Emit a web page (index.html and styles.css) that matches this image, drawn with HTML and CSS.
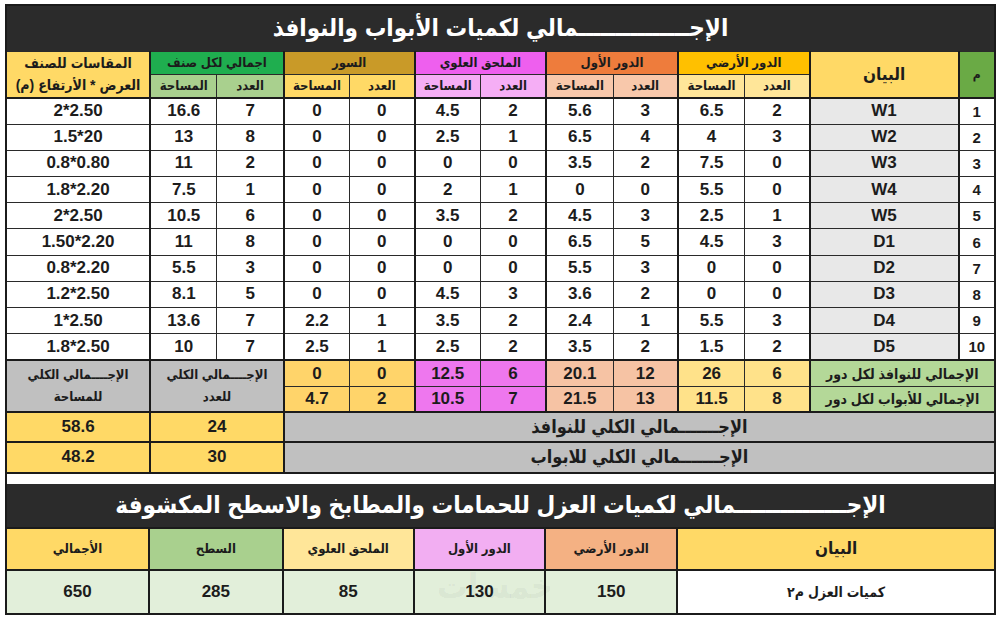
FILE: index.html
```html
<!DOCTYPE html>
<html lang="ar">
<head>
<meta charset="utf-8">
<link rel="stylesheet" href="styles.css">
</head>
<body>
<div class="sheet">
  <table class="grid top">
    <colgroup>
      <col class="w-no g"><col class="w-desc g">
      <col class="w-c"><col class="w-a g"><col class="w-c"><col class="w-a g">
      <col class="w-c2"><col class="w-a2 g"><col class="w-c"><col class="w-a2 g">
      <col class="w-a"><col class="w-a g"><col class="w-dim">
    </colgroup>
    <tr class="r-title"><th colspan="13" class="title">الإجـــــــــــــــمالي لكميات الأبواب والنوافذ</th></tr>
    <tr class="r-h1">
      <th rowspan="2" class="h-no">م</th>
      <th rowspan="2" class="h-desc">البيان</th>
      <th colspan="2" class="h-ground">الدور الأرضي</th>
      <th colspan="2" class="h-first">الدور الأول</th>
      <th colspan="2" class="h-annex">الملحق العلوي</th>
      <th colspan="2" class="h-fence">السور</th>
      <th colspan="2" class="h-total">اجمالي لكل صنف</th>
      <th rowspan="2" class="h-dim">المقاسات للصنف<br>العرض * الأرتفاع (م)</th>
    </tr>
    <tr class="r-h2">
      <th class="s-ground">العدد</th><th class="s-ground">المساحة</th>
      <th class="s-first">العدد</th><th class="s-first">المساحة</th>
      <th class="s-annex">العدد</th><th class="s-annex">المساحة</th>
      <th class="s-fence">العدد</th><th class="s-fence">المساحة</th>
      <th class="s-total">العدد</th><th class="s-total">المساحة</th>
    </tr>
    <tr class="r-data r-first"><td class="no">1</td><td class="desc">W1</td><td>2</td><td>6.5</td><td>3</td><td>5.6</td><td>2</td><td>4.5</td><td>0</td><td>0</td><td>7</td><td>16.6</td><td class="dim"><span class="ltr">2*2.50</span></td></tr>
    <tr class="r-data"><td class="no">2</td><td class="desc">W2</td><td>3</td><td>4</td><td>4</td><td>6.5</td><td>1</td><td>2.5</td><td>0</td><td>0</td><td>8</td><td>13</td><td class="dim"><span class="ltr">1.5*20</span></td></tr>
    <tr class="r-data"><td class="no">3</td><td class="desc">W3</td><td>0</td><td>7.5</td><td>2</td><td>3.5</td><td>0</td><td>0</td><td>0</td><td>0</td><td>2</td><td>11</td><td class="dim"><span class="ltr">0.8*0.80</span></td></tr>
    <tr class="r-data"><td class="no">4</td><td class="desc">W4</td><td>0</td><td>5.5</td><td>0</td><td>0</td><td>1</td><td>2</td><td>0</td><td>0</td><td>1</td><td>7.5</td><td class="dim"><span class="ltr">1.8*2.20</span></td></tr>
    <tr class="r-data"><td class="no">5</td><td class="desc">W5</td><td>1</td><td>2.5</td><td>3</td><td>4.5</td><td>2</td><td>3.5</td><td>0</td><td>0</td><td>6</td><td>10.5</td><td class="dim"><span class="ltr">2*2.50</span></td></tr>
    <tr class="r-data"><td class="no">6</td><td class="desc">D1</td><td>3</td><td>4.5</td><td>5</td><td>6.5</td><td>0</td><td>0</td><td>0</td><td>0</td><td>8</td><td>11</td><td class="dim"><span class="ltr">1.50*2.20</span></td></tr>
    <tr class="r-data"><td class="no">7</td><td class="desc">D2</td><td>0</td><td>0</td><td>3</td><td>5.5</td><td>0</td><td>0</td><td>0</td><td>0</td><td>3</td><td>5.5</td><td class="dim"><span class="ltr">0.8*2.20</span></td></tr>
    <tr class="r-data"><td class="no">8</td><td class="desc">D3</td><td>0</td><td>0</td><td>2</td><td>3.6</td><td>3</td><td>4.5</td><td>0</td><td>0</td><td>5</td><td>8.1</td><td class="dim"><span class="ltr">1.2*2.50</span></td></tr>
    <tr class="r-data"><td class="no">9</td><td class="desc">D4</td><td>3</td><td>5.5</td><td>1</td><td>2.4</td><td>2</td><td>3.5</td><td>1</td><td>2.2</td><td>7</td><td>13.6</td><td class="dim"><span class="ltr">1*2.50</span></td></tr>
    <tr class="r-data"><td class="no">10</td><td class="desc">D5</td><td>2</td><td>1.5</td><td>2</td><td>3.5</td><td>2</td><td>2.5</td><td>1</td><td>2.5</td><td>7</td><td>10</td><td class="dim"><span class="ltr">1.8*2.50</span></td></tr>
    <tr class="r-sum r-sum1">
      <td colspan="2" class="lbl">الإجمالي للنوافذ لكل دور</td>
      <td class="v-ground">6</td><td class="v-ground">26</td>
      <td class="v-first">12</td><td class="v-first">20.1</td>
      <td class="v-annex">6</td><td class="v-annex">12.5</td>
      <td class="v-fence">0</td><td class="v-fence">0</td>
      <td colspan="2" rowspan="2" class="grey sm">الإجــــمالي الكلي<br>للعدد</td>
      <td rowspan="2" class="grey sm">الإجــــمالي الكلي<br>للمساحة</td>
    </tr>
    <tr class="r-sum r-sum2">
      <td colspan="2" class="lbl">الإجمالي للأبواب لكل دور</td>
      <td class="v-ground">8</td><td class="v-ground">11.5</td>
      <td class="v-first">13</td><td class="v-first">21.5</td>
      <td class="v-annex">7</td><td class="v-annex">10.5</td>
      <td class="v-fence">2</td><td class="v-fence">4.7</td>
    </tr>
    <tr class="r-tot">
      <td colspan="10" class="grey big">الإجـــــــمالي الكلي للنوافذ</td>
      <td colspan="2" class="yel">24</td>
      <td class="yel">58.6</td>
    </tr>
    <tr class="r-tot">
      <td colspan="10" class="grey big">الإجـــــــمالي الكلي للابواب</td>
      <td colspan="2" class="yel">30</td>
      <td class="yel">48.2</td>
    </tr>
  </table>
  <div class="gap"></div>
  <table class="grid bottom">
    <colgroup>
      <col class="b-desc"><col class="b-c"><col class="b-c"><col class="b-c3"><col class="b-c4"><col class="w-dim">
    </colgroup>
    <tr class="r-title2"><th colspan="6" class="title">الإجـــــــــــــــمالي لكميات العزل للحمامات والمطابخ والاسطح المكشوفة</th></tr>
    <tr class="r-bh">
      <th class="bh-desc">البيان</th>
      <th class="bh-ground">الدور الأرضي</th>
      <th class="bh-first">الدور الأول</th>
      <th class="bh-annex">الملحق العلوي</th>
      <th class="bh-roof">السطح</th>
      <th class="bh-total">الأجمالي</th>
    </tr>
    <tr class="r-bd">
      <td class="bd-desc">كميات العزل م٢</td>
      <td class="bd-v">150</td>
      <td class="bd-v">130</td>
      <td class="bd-v">85</td>
      <td class="bd-v">285</td>
      <td class="bd-v">650</td>
    </tr>
  </table>
  <div class="watermark">خمسات</div>
</div>
</body>
</html>
```

FILE: styles.css
```css
html, body {
  margin: 0;
  padding: 0;
  background: #ffffff;
}
body {
  font-family: "Liberation Sans", "DejaVu Sans Condensed", "DejaVu Sans", sans-serif;
  color: #1c1c1c;
}
.sheet {
  position: relative;
  width: 987px;
  margin: 4px 0 0 5px;
  border: 2px solid #1b1b1b;
  box-sizing: content-box;
  direction: rtl;
  overflow: hidden;
}
.grid {
  width: 987px;
  border-collapse: collapse;
  table-layout: fixed;
  border-style: hidden;
}
.grid th, .grid td {
  border: 1px solid #2a2a2a;
  padding: 0;
  text-align: center;
  vertical-align: middle;
  font-weight: bold;
  overflow: hidden;
  white-space: nowrap;
}
.grid col.g { border-left: 2px solid #1b1b1b; }
.w-no { width: 35px; }
.w-desc { width: 147px; }
.w-c { width: 64px; }
.w-a { width: 66px; }
.w-c2 { width: 65px; }
.w-a2 { width: 65px; }
.w-dim { width: 141px; }

.title {
  background: #2b2b2b;
  color: #ffffff;
  font-size: 24px;
  font-weight: bold;
}
.r-title { height: 45px; }
.r-h1 { height: 23px; }
.r-h2 { height: 24px; }
.r-h1 th, .r-h2 th { font-size: 13px; }
.r-first td { border-top: 2px solid #1b1b1b; }
.h-no { background: #6aaa45; font-size: 12px !important; font-weight: normal; }
.h-desc { background: #ffd966; font-size: 17px !important; }
.h-ground { background: #ffc000; }
.h-first { background: #ee7c3c; }
.h-annex { background: #ee5fee; }
.h-fence { background: #c99a28; }
.h-total { background: #1fae4f; }
.h-dim { background: #ffd966; line-height: 22px; font-size: 14px !important; }
.s-ground { background: #ffe699; }
.s-first { background: #f8c8ab; }
.s-annex { background: #f5aef5; }
.s-fence { background: #ffd966; }
.s-total { background: #a9d08e; }

.r-data { height: 26.2px; }
.r-data td { font-size: 17px; background: #ffffff; }
.r-data td.desc { background: #e8e8e8; }
.r-data td.no { font-size: 15px; }
.ltr { direction: ltr; unicode-bidi: isolate; }

.r-sum1 { height: 27px; }
.r-sum2 { height: 25px; }
.r-sum1 td { border-top: 2px solid #1b1b1b; }
.r-sum td { font-size: 17px; }
.r-sum td.lbl { background: #b4d898; font-size: 14px; }
.v-ground { background: #ffe28a; }
.v-first { background: #f6c3a4; }
.v-annex { background: #ee77ee; }
.v-fence { background: #ffd46a; }
.grey { background: #c0c0c0; }
.grey.sm { font-size: 13px; line-height: 22px; }
.grey.big { font-size: 18px; }
.yel { background: #ffd966; font-size: 17px; }
.r-tot { height: 30px; }
.r-tot td { border-top: 2px solid #1b1b1b; border-left: 2px solid #1b1b1b; }

.gap {
  height: 10px;
  background: #ffffff;
  border-top: 2px solid #1b1b1b;
}

.bottom th, .bottom td { border: 2px solid #1b1b1b; }
.b-desc { width: 315px; }
.b-c { width: 131px; }
.b-c3 { width: 130px; }
.b-c4 { width: 133px; }
.r-title2 { height: 44px; }
.r-bh { height: 42px; }
.r-bh th { font-size: 13px; }
.bh-desc { background: #ffd966; font-size: 17px !important; }
.bh-ground { background: #f4b183; }
.bh-first { background: #f2aef2; }
.bh-annex { background: #ffe699; }
.bh-roof { background: #a9d08e; }
.bh-total { background: #ffd966; }
.r-bd { height: 43px; }
.bd-v { background: #e2efda; font-size: 17px; }
.bd-desc { background: #ffffff; font-size: 14px; }

.watermark {
  position: absolute;
  left: 430px;
  top: 560px;
  font-size: 34px;
  font-weight: bold;
  color: rgba(0, 0, 0, 0.05);
  pointer-events: none;
}
```
